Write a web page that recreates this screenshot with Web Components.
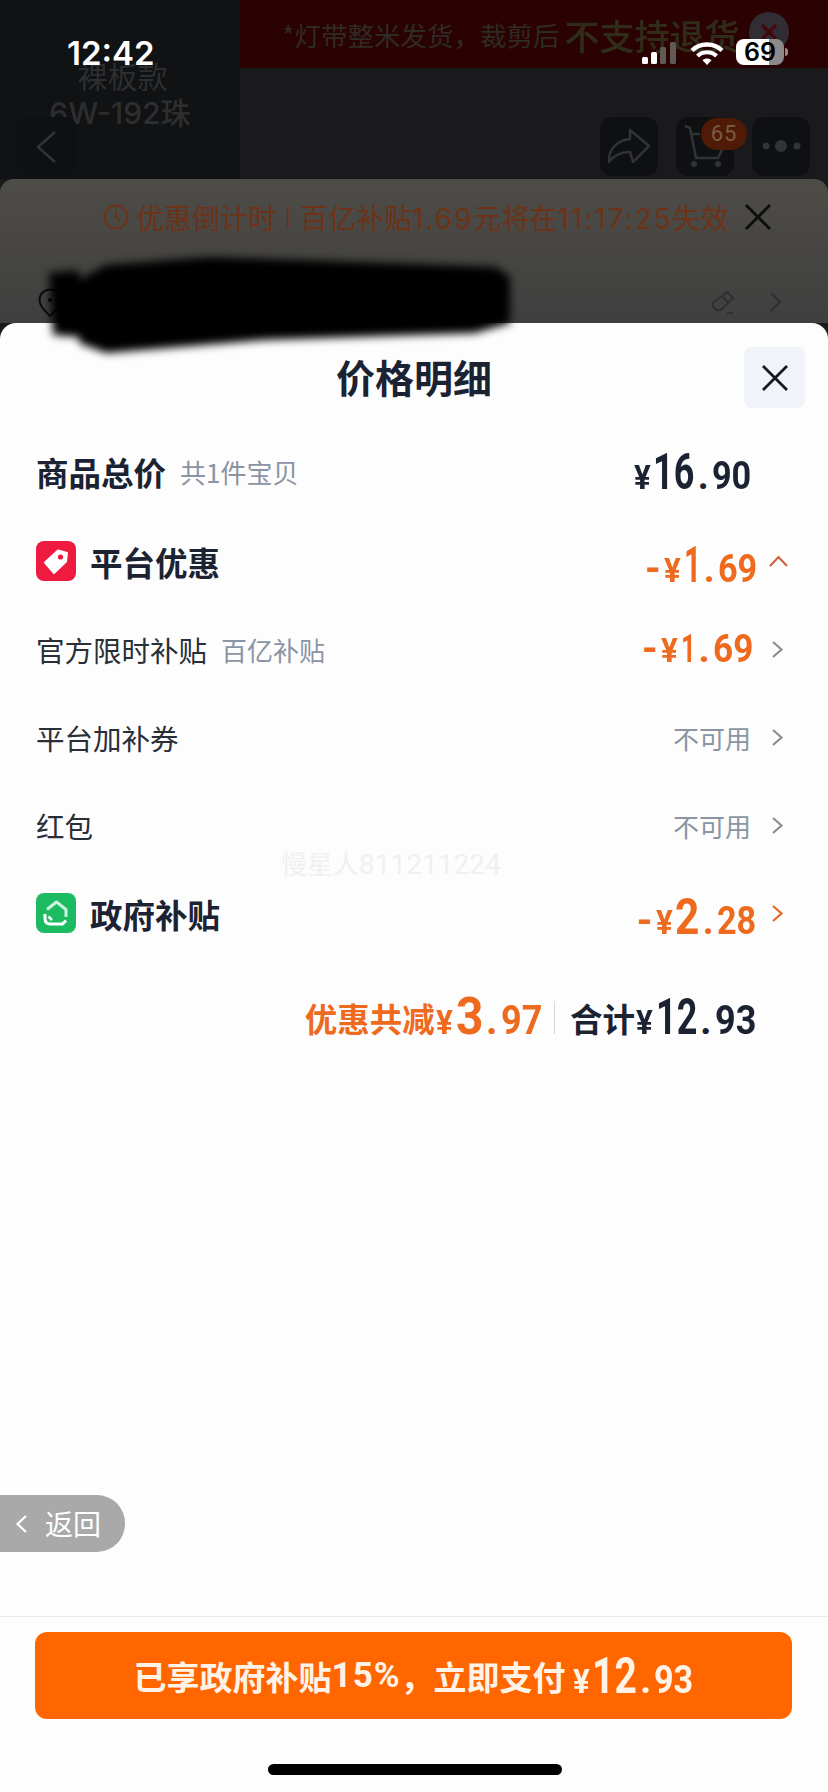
<!DOCTYPE html>
<html lang="zh">
<head>
<meta charset="utf-8">
<title>价格明细</title>
<style>
  html, body { margin: 0; padding: 0; background: #111; }
  body { font-family: "Noto Sans CJK SC", "Noto Sans", sans-serif; }
</style>
</head>
<body>
<app-shell>
  <status-bar></status-bar>
  <dim-header></dim-header>
  <coupon-sheet></coupon-sheet>
  <redact-mark></redact-mark>
  <price-sheet>
    <price-row kind="head">
      <span slot="label">商品总价</span>
      <span slot="note">共1件宝贝</span>
      <money-text slot="value" sym="34" int="50" dec="38" si="0.72" color="#1b2333">¥|16|90</money-text>
    </price-row>
    <price-row kind="group" arrow="up" arrow-color="#c9613b" arrow-gap="12">
      <tag-icon slot="icon"></tag-icon>
      <span slot="label">平台优惠</span>
      <money-text slot="value" sym="34" int="50" dec="38" si="0.6" dash>¥|1|69</money-text>
    </price-row>
    <price-row arrow="right" arrow-gap="18">
      <span slot="label">官方限时补贴</span>
      <span slot="note">百亿补贴</span>
      <money-text slot="value" sym="34" int="39" dec="39" si="0.66" dash>¥|1|69</money-text>
    </price-row>
    <price-row arrow="right" arrow-gap="20">
      <span slot="label">平台加补券</span>
      <span slot="tail">不可用</span>
    </price-row>
    <price-row arrow="right" arrow-gap="20">
      <span slot="label">红包</span>
      <span slot="tail">不可用</span>
    </price-row>
    <price-row kind="group" arrow="right" arrow-color="#e8662a" arrow-gap="15">
      <gov-icon slot="icon"></gov-icon>
      <span slot="label">政府补贴</span>
      <money-text slot="value" sym="34" int="50" dec="38" si="0.85" dash>¥|2|28</money-text>
    </price-row>
    <total-line></total-line>
  </price-sheet>
</app-shell>

<script>
  // every element is just a shadow root filled from a string
  class Base extends HTMLElement {
    constructor() {
      super();
      this.attachShadow({ mode: "open" });
      this.shadowRoot.innerHTML = this.constructor.html;
    }
  }

  const cjk = '"Noto Sans CJK SC", "Noto Sans", sans-serif';
  const chevron = (color, w) =>
    `<svg width="13" height="19" viewBox="0 0 13 19" fill="none"><path d="M2 2l8.5 7.5L2 17" stroke="${color}" stroke-width="${w}"/></svg>`;

  class AppShell extends Base {
    static html = `
      <style>
        :host { display: flex; flex-direction: column; position: relative; width: 828px; height: 1792px; overflow: hidden; background: #1a1a1c; }
      </style>
      <slot></slot>`;
  }

  class StatusBar extends Base {
    static html = `
      <style>
        :host { position: absolute; top: 0; left: 0; right: 0; height: 70px; z-index: 3; color: #fff; font-family: Inter, Roboto, sans-serif; display: block; }
        .time { position: absolute; left: 67px; top: 33px; font-size: 33px; line-height: 40px; font-weight: 600; }
        .icons { position: absolute; left: 642px; top: 39px; display: flex; align-items: flex-end; height: 26px; }
        .bat { margin-left: 12px; width: 48px; height: 26px; border-radius: 8px; color: #000; font-size: 25px; font-weight: 600; line-height: 26px; text-align: center;
          background: linear-gradient(90deg, #fff 0 33px, #8f8a8a 33px); }
        .nub { width: 3px; height: 8px; background: #8f8a8a; border-radius: 0 3px 3px 0; margin: 0 0 9px 1px; }
      </style>
      <div class="time">12:42</div>
      <div class="icons">
        <svg width="36" height="24" viewBox="0 0 36 24">
          <rect x="0" y="16" width="6" height="7" rx="1.5" fill="#fff"/>
          <rect x="9" y="11" width="6" height="12" rx="1.5" fill="#fff"/>
          <rect x="18" y="6" width="6" height="17" rx="1.5" fill="#5f5a55"/>
          <rect x="28" y="1" width="6" height="22" rx="1.5" fill="#5f5a55"/>
        </svg>
        <svg width="34" height="24" viewBox="0 0 34 24" fill="none" style="margin-left:12px">
          <path d="M2 9.5C10 1.5 24 1.5 32 9.5" stroke="#fff" stroke-width="4.4"/>
          <path d="M7.5 15C12.5 10 21.5 10 26.5 15" stroke="#fff" stroke-width="4.2"/>
          <path d="M12.5 19.3C15 17 19 17 21.5 19.3L17 24Z" fill="#fff"/>
        </svg>
        <div class="bat">69</div>
        <div class="nub"></div>
      </div>`;
  }

  class DimHeader extends Base {
    static html = `
      <style>
        :host { display: grid; grid-template-columns: 240px 1fr; height: 179px; flex: none; position: relative; background: #1a1a1c; font-family: ${cjk}; }
        .side { background: #111213; color: #2d2e30; text-align: center; font-size: 30px; line-height: 38px; padding: 56px 0 0 5px; box-sizing: border-box; }
        .side div + div { font: 500 30px/38px Inter, ${cjk}; margin-left: -5px; }
        .warn { height: 68px; background: #2a0202; color: #302a27; display: flex; align-items: center; padding-left: 42px; font-size: 26.5px; white-space: nowrap; }
        .warn b { font-size: 35px; font-weight: 500; color: #302c18; margin: 0 10px 0 5px; }
        .warn i { width: 40px; height: 40px; border-radius: 50%; background: #302e34; font-style: normal; display: grid; place-items: center; flex: none; margin-top: -4px; }
        .nav { position: absolute; left: 17px; right: 18px; top: 117px; display: flex; gap: 18px; }
        .btn { width: 58px; height: 59px; border-radius: 12px; background: #0f1012; position: relative; }
        .btn:first-child { margin-right: auto; width: 60px; }
        .btn svg { position: absolute; inset: 0; }
        .badge { position: absolute; left: 25px; top: 1px; width: 46px; height: 32px; border-radius: 16px; background: #4f1a06; color: #7a5a48; font: 22px/32px Roboto, sans-serif; text-align: center; letter-spacing: 1px; }
      </style>
      <div class="side"><div>裸板款</div><div>6W-192珠</div></div>
      <div class="warn">*灯带整米发货，裁剪后<b>不支持退货</b><i>
        <svg width="22" height="22" viewBox="0 0 22 22"><path d="M4 4l14 14M18 4L4 18" stroke="#420a0a" stroke-width="3.5"/></svg></i></div>
      <div class="nav">
        <div class="btn"><svg width="60" height="59" viewBox="0 0 60 59" fill="none"><path d="M38 15L21 30l17 15" stroke="#323335" stroke-width="2.5"/></svg></div>
        <div class="btn"><svg width="58" height="59" viewBox="0 0 58 59" fill="none"><path d="M30 13L49 29 33 45l-3-10C22 35 14 38 9 45 8 32 18 23 30 22Z" stroke="#323335" stroke-width="2.5" stroke-linejoin="round"/></svg></div>
        <div class="btn"><svg width="58" height="59" viewBox="0 0 58 59" fill="none"><path d="M9 9l5 2 6 30h22l5-10M14 17h10" stroke="#323335" stroke-width="2.5"/><circle cx="18" cy="47" r="3" fill="#323335"/><circle cx="42" cy="47" r="3" fill="#323335"/></svg><div class="badge">65</div></div>
        <div class="btn"><svg width="58" height="59" viewBox="0 0 58 59" fill="#323335"><circle cx="14" cy="29" r="3.5"/><circle cx="29" cy="29" r="6"/><circle cx="45" cy="29" r="3.5"/></svg></div>
      </div>`;
  }

  class CouponSheet extends Base {
    static html = `
      <style>
        :host { display: block; height: 144px; flex: none; border-radius: 14px 14px 0 0; background: linear-gradient(#4e4c47, #3f3f3f); font-family: Inter, ${cjk}; }
        .count { display: flex; align-items: center; height: 28px; padding: 24px 56px 0 103px; color: #6e3216; font-size: 28px; white-space: nowrap; }
        .bar { margin: 0 9px 0 9px; font-size: 18px; }
        .n { letter-spacing: 2px; }
        .count .x { margin-left: auto; }
        .addr { display: flex; align-items: center; height: 30px; margin-top: 56px; padding: 0 46px 0 38px; }
        .addr .fill { flex: 1; }
      </style>
      <div class="count">
        <svg width="26" height="26" viewBox="0 0 26 26" fill="none" stroke="#6e3216" stroke-width="2" style="margin-right:7px"><circle cx="13" cy="13" r="11.5"/><path d="M13 6v7.500l4 3.500"/></svg>
        <span>优惠倒计时</span><span class="bar">|</span><span>百亿补贴<span class="n">1.69</span>元将在<span class="n">11:17:25</span>失效</span>
        <svg class="x" width="28" height="28" viewBox="0 0 28 28" fill="none"><path d="M2 2l24 24M26 2L2 26" stroke="#0c0c0c" stroke-width="2.8"/></svg>
      </div>
      <div class="addr">
        <svg width="24" height="29" viewBox="0 0 24 29" fill="none"><path d="M12 28C5 21 1.5 17 1.5 12a10.500 10.500 0 0 1 21 0C22.5 17 19 21 12 28Z" stroke="#0c0c0c" stroke-width="2"/><circle cx="12" cy="12" r="2" fill="#0c0c0c"/></svg>
        <div class="fill"></div>
        <svg width="26" height="26" viewBox="0 0 26 26" fill="none" stroke="#2c2f34" stroke-width="1.8"><path d="M16 3l6 6-12 12H5l-3-3v-4Z"/><path d="M12 8l6 6M16 24h6"/></svg>
        <svg width="13" height="22" viewBox="0 0 13 22" fill="none" style="margin-left:32px"><path d="M2 2l9 9-9 9" stroke="#2c2f34" stroke-width="2"/></svg>
      </div>`;
  }

  // the black scribble that hides the address, it lies over both sheets
  class RedactMark extends Base {
    static html = `
      <style>
        :host { position: absolute; left: 49px; top: 257px; width: 462px; height: 97px; z-index: 2; filter: blur(4px); display: block; }
        div { height: 100%; background: #000;
          clip-path: polygon(0 16px, 30px 13px, 30px 23px, 57px 8px, 162px 0, 447px 10px, 461px 20px, 461px 66px, 426px 76px, 215px 83px, 57px 96px, 30px 86px, 30px 80px, 4px 78px); }
      </style>
      <div></div>`;
  }

  class PriceSheet extends Base {
    static html = `
      <style>
        :host { display: flex; flex-direction: column; flex: 1; position: relative; z-index: 1; background: #fdfdfd; border-radius: 16px 16px 0 0; font-family: ${cjk}; color: #1b2333; }
        header { display: grid; grid-template-columns: 1fr auto 1fr; height: 106px; flex: none; }
        h1 { grid-column: 2; margin: 0; font-size: 39px; font-weight: 700; line-height: 106px; }
        .close { grid-column: 3; justify-self: end; margin: 24px 23px 0 0; width: 61px; height: 61px; border-radius: 8px; background: #f0f3f7; display: grid; place-items: center; }
        .mark { position: absolute; left: 281px; top: 521px; font-size: 26px; color: #f0f0f0; white-space: nowrap; }
        .mark em { font: normal 28px Roboto, sans-serif; }
        .body { flex: 1; }
      </style>
      <header>
        <h1>价格明细</h1>
        <div class="close"><svg width="28" height="28" viewBox="0 0 28 28" fill="none"><path d="M2 2l24 24M26 2L2 26" stroke="#14181f" stroke-width="2.8"/></svg></div>
      </header>
      <div class="body"><slot></slot></div>
      <div class="mark">慢星人<em>811211224</em></div>
      <back-pill></back-pill>
      <pay-footer></pay-footer>`;
  }

  class PriceRow extends Base {
    static html = `
      <style>
        :host { display: flex; align-items: center; height: 88px; padding: 0 44px 0 36px; box-sizing: border-box; font-size: 28.5px; color: #2a2e36; white-space: nowrap; }
        :host([kind="head"]) { padding-right: 77px; padding-bottom: 3px; font-size: 32.5px; font-weight: 700; color: #1b2333; }
        :host([kind="group"]) { font-size: 32.5px; font-weight: 700; color: #1b2333; }
        .main { flex: 1; display: flex; align-items: center; }
        ::slotted([slot="icon"]) { margin-right: 14px; }
        ::slotted([slot="note"]) { margin-left: 14px; font-size: 26px; font-weight: 400; color: #8a94a3; }
        ::slotted([slot="tail"]) { font-size: 26px; color: #8a94a3; }
        :host([kind="group"]) ::slotted([slot="value"]) { margin-top: 7px; }
        .arrow { display: flex; }
      </style>
      <div class="main"><slot name="icon"></slot><slot name="label"></slot><slot name="note"></slot></div>
      <slot name="value"></slot><slot name="tail"></slot>
      <div class="arrow"></div>`;
    connectedCallback() {
      const box = this.shadowRoot.querySelector(".arrow");
      const dir = this.getAttribute("arrow");
      if (!dir) {
        box.remove();
        return;
      }
      const color = this.getAttribute("arrow-color") || "#8d8f94";
      box.style.marginLeft = this.getAttribute("arrow-gap") + "px";
      if (dir === "up") {
        box.style.marginRight = "-4px";
        box.innerHTML = `<svg width="19" height="12" viewBox="0 0 19 12" fill="none"><path d="M1 11l8.5-9L18 11" stroke="${color}" stroke-width="2"/></svg>`;
      } else {
        box.innerHTML = chevron(color, 2.2);
      }
    }
  }

  // text is "symbol|int|dec"; each part is squeezed on its own to look like DIN
  class MoneyText extends Base {
    static html = `
      <style>
        :host { display: inline-flex; align-items: baseline; font-family: Roboto, sans-serif; font-weight: 700; color: var(--c, #ee6a1e); white-space: nowrap; line-height: 1; }
        span { display: inline-block; transform-origin: left center; }
        .dash { margin-right: 3px; }
        .sym { margin-right: 3px; }
        .dot { margin: 0 3px; }
      </style>
      <span class="dash">-</span><span class="sym"></span><span class="int"></span><span class="dot">.</span><span class="dec"></span>`;
    connectedCallback() {
      const [sym, int, dec] = this.textContent.split("|");
      const fill = (cls, text, size, squeeze) => {
        const el = this.shadowRoot.querySelector(cls);
        el.textContent = text;
        el.style.fontSize = size + "px";
        if (squeeze < 1) {
          // scale does not change the box, so take the lost width back with a margin
          const w = el.getBoundingClientRect().width;
          const right = parseFloat(getComputedStyle(el).marginRight) || 0;
          el.style.transform = `scaleX(${squeeze})`;
          el.style.marginRight = right - w * (1 - squeeze) + "px";
        }
      };
      if (this.hasAttribute("color")) this.style.setProperty("--c", this.getAttribute("color"));
      const decSize = this.getAttribute("dec");
      fill(".sym", sym, this.getAttribute("sym"), 0.92);
      fill(".int", int, this.getAttribute("int"), Number(this.getAttribute("si") || 0.8));
      fill(".dot", ".", decSize, 1);
      fill(".dec", dec, decSize, 0.9);
      if (this.hasAttribute("dash")) {
        this.shadowRoot.querySelector(".dash").style.fontSize = "40px";
      } else {
        this.shadowRoot.querySelector(".dash").remove();
      }
    }
  }

  class TotalLine extends Base {
    static html = `
      <style>
        :host { display: flex; justify-content: flex-end; align-items: center; height: 88px; margin-top: 16px; padding-right: 72px; font-size: 32.5px; font-weight: 700; white-space: nowrap; }
        .off { color: #ee6a1e; }
        .rule { width: 1px; height: 33px; background: #d8d8d8; margin: 0 15px 0 12px; }
        .sum { color: #1b2333; }
        money-text { margin-left: 1px; }
      </style>
      <span class="off">优惠共减</span>
      <money-text sym="34" int="52" dec="40" si="0.92">¥|3|97</money-text>
      <div class="rule"></div>
      <span class="sum">合计</span>
      <money-text sym="34" int="50" dec="40" si="0.72" color="#1b2333">¥|12|93</money-text>`;
  }

  class TagIcon extends Base {
    static html = `
      <style>:host { display: block; width: 40px; height: 40px; border-radius: 8px; background: #ee1a40; }</style>
      <svg width="40" height="40" viewBox="0 0 40 40"><path d="M22 9.500l9 2.500-1 8.500L18 32 9 21.500Z" fill="#fff" stroke="#fff" stroke-width="2" stroke-linejoin="round"/><circle cx="24.500" cy="16" r="2.600" fill="#ee1a40"/></svg>`;
  }

  class GovIcon extends Base {
    static html = `
      <style>:host { display: block; width: 40px; height: 40px; border-radius: 8px; background: #1dbb61; }</style>
      <svg width="40" height="40" viewBox="0 0 40 40" fill="none"><path d="M11 16.500L20.500 9 30 16.500V24" stroke="#c9f5de" stroke-width="3" stroke-linejoin="round"/><path d="M9 21v4.500C9 29 11 31 14.500 31H26.500L30 27.500" stroke="#fff" stroke-width="3"/><path d="M16 27l-3.500-3.500" stroke="#fff" stroke-width="2.500"/></svg>`;
  }

  class BackPill extends Base {
    static html = `
      <style>
        :host { position: absolute; left: 0; top: 1172px; width: 125px; height: 57px; display: flex; align-items: center; background: #a9a9a9; border-radius: 0 28px 28px 0; color: #fff; font-size: 28px; box-sizing: border-box; padding-left: 15px; }
        span { margin-left: 17px; margin-top: -2px; }
      </style>
      <svg width="13" height="20" viewBox="0 0 13 20" fill="none"><path d="M11 2l-8.500 8 8.500 8" stroke="#fff" stroke-width="2.200"/></svg>
      <span>返回</span>`;
  }

  class PayFooter extends Base {
    static html = `
      <style>
        :host { display: block; flex: none; border-top: 1px solid #ececec; height: 176px; box-sizing: border-box; padding: 15px 36px 0 35px; position: relative; }
        button { all: unset; box-sizing: border-box; display: flex; width: 100%; height: 87px; border-radius: 12px; background: #ff6600; color: #fff3e8; align-items: center; justify-content: center; font: 700 33px ${cjk}; white-space: nowrap; }
        .n { font: 700 35px Roboto, sans-serif; letter-spacing: 1px; }
        money-text { margin-left: 7px; --c: #fff3e8; }
        .home { width: 294px; height: 11px; border-radius: 6px; background: #000; margin: 45px auto 0; transform: translateX(1px); }
      </style>
      <button>已享政府补贴<span class="n">15%</span>，立即支付<money-text sym="34" int="50" dec="38" si="0.78">¥|12|93</money-text></button>
      <div class="home"></div>`;
  }

  customElements.define("app-shell", AppShell);
  customElements.define("status-bar", StatusBar);
  customElements.define("dim-header", DimHeader);
  customElements.define("coupon-sheet", CouponSheet);
  customElements.define("redact-mark", RedactMark);
  customElements.define("price-sheet", PriceSheet);
  customElements.define("price-row", PriceRow);
  customElements.define("money-text", MoneyText);
  customElements.define("total-line", TotalLine);
  customElements.define("tag-icon", TagIcon);
  customElements.define("gov-icon", GovIcon);
  customElements.define("back-pill", BackPill);
  customElements.define("pay-footer", PayFooter);
</script>
</body>
</html>
